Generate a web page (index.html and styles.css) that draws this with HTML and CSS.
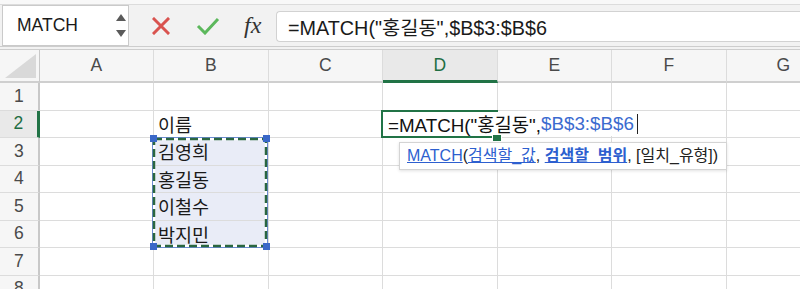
FILE: index.html
```html
<!DOCTYPE html>
<html lang="ko">
<head>
  <meta charset="UTF-8">
  <title>MATCH</title>
  <link rel="stylesheet" href="styles.css">
</head>
<body>
  <div class="topstrip"></div>
  <div class="toolbar">
    <div class="namebox">
      <span>MATCH</span>
      <svg class="spin" width="10" height="26" viewBox="0 0 10 26">
        <polygon points="5,1 10,8 0,8" fill="#5a5a5a"/>
        <polygon points="0,17 10,17 5,24" fill="#5a5a5a"/>
      </svg>
    </div>
    <div class="actions">
      <svg width="18" height="18" viewBox="0 0 18 18">
        <path d="M2 2 L16 16 M16 2 L2 16" stroke="#d9534f" stroke-width="3" stroke-linecap="square"/>
      </svg>
      <svg width="24" height="18" viewBox="0 0 24 18">
        <path d="M2 9 L9 16 L22 2" stroke="#5cb85c" stroke-width="3" fill="none"/>
      </svg>
      <span class="fx">fx</span>
    </div>
    <div class="formula">=MATCH("홍길동",$B$3:$B$6</div>
  </div>

  <div class="sheet">
    <div class="corner">
      <svg width="31" height="24" viewBox="0 0 31 24"><polygon points="0,24 31,24 31,0" fill="#d9d9d9"/></svg>
    </div>
    <div class="ch">A</div><div class="ch">B</div><div class="ch">C</div>
    <div class="ch on">D</div><div class="ch">E</div><div class="ch">F</div><div class="ch">G</div>

    <div class="rh">1</div>
    <div class="c"></div><div class="c"></div><div class="c"></div><div class="c"></div><div class="c"></div><div class="c"></div><div class="c"></div>

    <div class="rh on">2</div>
    <div class="c"></div><div class="c">이름</div><div class="c"></div>
    <div class="c active">
      <div class="edit">=MATCH("홍길동",<span class="ref-text">$B$3:$B$6</span><i class="caret"></i></div>
      <i class="fill-handle"></i>
      <div class="hint"><u class="link">MATCH</u>(<u class="link">검색할_값</u>, <u class="link cur">검색할_범위</u>, [일치_유형])</div>
    </div>
    <div class="c"></div><div class="c"></div><div class="c"></div>

    <div class="rh">3</div>
    <div class="c"></div>
    <div class="c ref">김영희
      <div class="marquee">
        <svg width="118" height="113" viewBox="0 0 118 113">
          <rect x="1.5" y="1.5" width="115" height="110" fill="none" stroke="#3b66c4" stroke-width="1"/>
          <rect x="3" y="3" width="112" height="107" fill="none" stroke="#fff" stroke-width="2.5"/>
          <rect x="3" y="3" width="112" height="107" fill="none" stroke="#2a6640" stroke-width="2.5" stroke-dasharray="8 4"/>
        </svg>
        <i class="knob tl"></i><i class="knob tr"></i><i class="knob bl"></i><i class="knob br"></i>
      </div>
    </div>
    <div class="c"></div><div class="c"></div><div class="c"></div><div class="c"></div><div class="c"></div>

    <div class="rh">4</div>
    <div class="c"></div><div class="c ref">홍길동</div><div class="c"></div><div class="c"></div><div class="c"></div><div class="c"></div><div class="c"></div>

    <div class="rh">5</div>
    <div class="c"></div><div class="c ref">이철수</div><div class="c"></div><div class="c"></div><div class="c"></div><div class="c"></div><div class="c"></div>

    <div class="rh">6</div>
    <div class="c"></div><div class="c ref">박지민</div><div class="c"></div><div class="c"></div><div class="c"></div><div class="c"></div><div class="c"></div>

    <div class="rh">7</div>
    <div class="c"></div><div class="c"></div><div class="c"></div><div class="c"></div><div class="c"></div><div class="c"></div><div class="c"></div>

    <div class="rh">8</div>
    <div class="c"></div><div class="c"></div><div class="c"></div><div class="c"></div><div class="c"></div><div class="c"></div><div class="c"></div>
  </div>
</body>
</html>
```

FILE: styles.css
```css
body { margin: 0; font-family: "Liberation Sans", "Noto Sans CJK KR", sans-serif; color: #1a1a1a; background: #fff; overflow: hidden; }

.topstrip { height: 4px; background: #f8f8f8; border-bottom: 1px solid #dcdcdc; }
.toolbar { height: 41px; display: flex; align-items: center; background: #f2f2f2; border-bottom: 4px double #cdcdcd; }
.namebox { box-sizing: border-box; width: 127px; height: 41px; margin-left: 2px; display: flex; align-items: center; justify-content: space-between; padding: 0 2px 0 14px; background: #fff; border: 1px solid #cacaca; font-size: 17.5px; }
.actions { width: 147px; display: flex; align-items: center; gap: 26px; padding-left: 23px; box-sizing: border-box; }
.fx { font-family: "Liberation Serif", serif; font-style: italic; font-size: 24px; color: #333; margin-left: -2px; }
.formula { flex: 1; height: 29px; margin-top: 1px; display: flex; align-items: center; padding-left: 11px; background: #fff; border: 1px solid #d2d2d2; border-right: none; border-radius: 4px 0 0 4px; font-size: 19.8px; white-space: nowrap; }

.sheet { display: grid; grid-template-columns: 39.5px repeat(7, 114.5px); grid-template-rows: 33px repeat(8, 27.5px); }
.sheet > div { box-sizing: border-box; border-right: 1px solid #dcdcdc; border-bottom: 1px solid #dcdcdc; }
.corner { background: #f6f6f6; display: flex; align-items: flex-end; padding: 0 0 3px 5px; border-right: 1px solid #c8c8c8 !important; border-bottom: 2px solid #cfcfcf !important; }
.ch { background: #f6f6f6; display: flex; align-items: center; justify-content: center; font-size: 17.5px; color: #4a4a4a; border-bottom: 2px solid #cfcfcf !important; }
.ch.on { background: #e9e9e9; color: #1f6e43; border-bottom: 3px solid #217346 !important; }
.rh { background: #f6f6f6; display: flex; align-items: center; justify-content: center; font-size: 17.5px; color: #4a4a4a; border-right: 2px solid #c8c8c8 !important; }
.rh.on { background: #e9e9e9; color: #1f6e43; border-right: 3px solid #217346 !important; }

.c { display: flex; align-items: center; padding-left: 4px; font-size: 18.5px; white-space: nowrap; }
.c.ref { background: #e9ecf7; }
.c:has(.marquee) { position: relative; z-index: 3; }
.marquee { position: absolute; left: -3px; top: -2px; width: 118px; height: 113px; }
.marquee svg { display: block; }
.knob { position: absolute; width: 7px; height: 7px; background: #3a68c8; }
.knob.tl { left: -1px; top: -1px; }
.knob.tr { right: -1px; top: -1px; }
.knob.bl { left: -1px; bottom: -1px; }
.knob.br { right: -1px; bottom: -1px; }

.c.active { position: relative; z-index: 4; padding: 0; align-items: stretch; overflow: visible; }
.c.active::before { content: ""; position: absolute; left: -2px; top: -1px; right: -1px; bottom: -1px; border: 2px solid #217346; }
.edit { position: relative; margin: 1px 0 0; height: 24px; display: flex; align-items: center; padding: 0 6px 0 5px; background: #fff; font-size: 18.8px; color: #111; }
.ref-text { color: #3b6bcf; }
.caret { display: inline-block; width: 1px; height: 20px; margin-left: 3px; background: #222; }
.fill-handle { position: absolute; right: -5px; bottom: -5px; width: 8px; height: 6px; background: #217346; border: 1px solid #fff; }
.hint { position: absolute; left: 16px; top: 31px; height: 26px; line-height: 25px; padding: 0 8px 0 7px; background: #fff; border: 1px solid #d4d4d4; box-shadow: 0 1px 3px rgba(0, 0, 0, 0.12); font-size: 16px; color: #222; white-space: nowrap; }
.link { color: #2d5fcf; }
.link.cur { font-weight: bold; }
```
